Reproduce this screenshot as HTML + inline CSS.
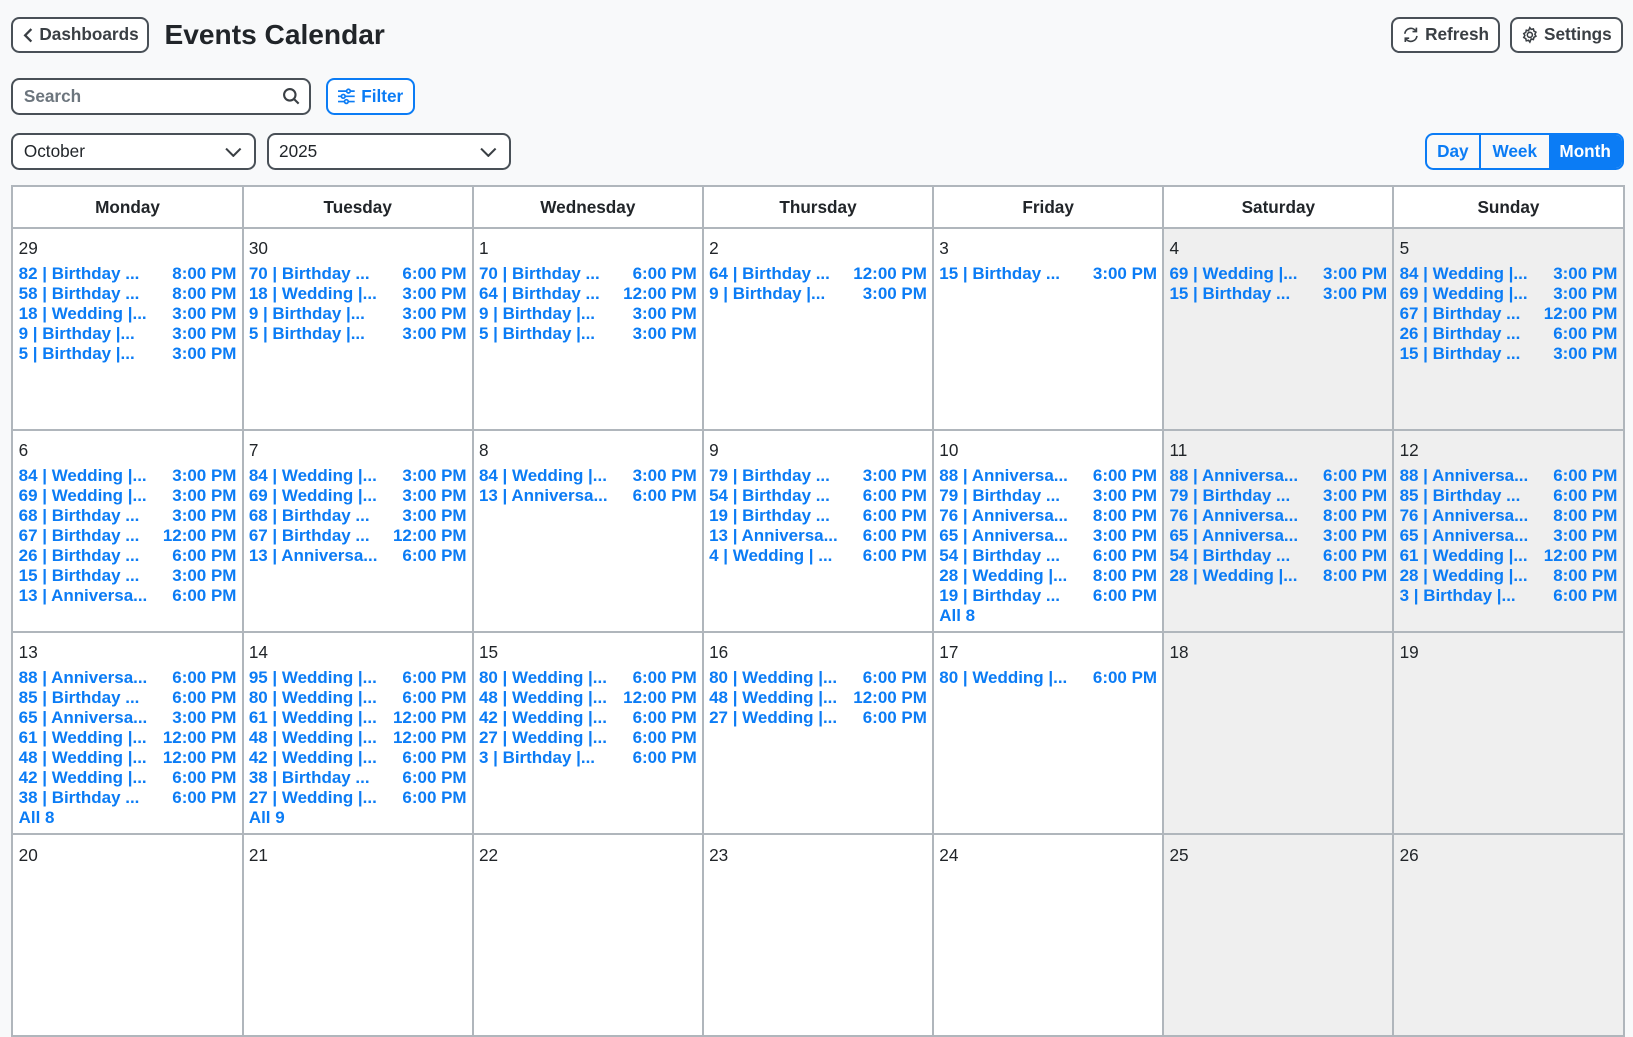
<!DOCTYPE html>
<html><head><meta charset="utf-8"><style>
*{box-sizing:border-box;margin:0;padding:0}
body{width:1633px;height:872px;overflow:hidden;background:#f8f9fa;font-family:"Liberation Sans",sans-serif;color:#212529;}
#w{position:relative;zoom:1.0415;width:1568px;height:838px}
.btn{position:absolute;border:2px solid #495057;border-radius:8px;background:#fff;font-weight:bold;font-size:16.5px;color:#3a3f44;display:flex;align-items:center;justify-content:center;gap:5px}
.inp{position:absolute;border:2px solid #495057;border-radius:8px;background:#fff;font-size:16.5px;padding-left:10px;display:flex;align-items:center}
table{position:absolute;left:11px;top:178px;border-collapse:collapse;table-layout:fixed;width:1548px}
td,th{border:2px solid #b0b6bc;width:221px;vertical-align:top;background:#fff}
th{height:40px;font-size:16.5px;font-weight:bold;vertical-align:middle}
td{height:194px;padding:8px 5px 0 5px;font-size:16.5px}
td.we{background:#efefef}
.d{height:25.5px;line-height:22px}
.e{display:flex;justify-content:space-between;color:#0b7cf5;font-weight:bold;height:19.2px;line-height:19px;font-size:16.3px;white-space:nowrap}
.seg{position:absolute;top:128px;left:1368px;height:35px;width:191px;border:2px solid #0b7cf5;border-radius:8px;display:flex;overflow:hidden;font-weight:bold;font-size:16.5px;color:#0b7cf5}
.seg div{display:flex;align-items:center;justify-content:center}
</style></head><body><div id="w">
<div class="btn" style="left:11px;top:16px;width:132px;height:35px"><svg width="12" height="16" viewBox="0 0 12 16"><path d="M9 2 L3 8 L9 14" fill="none" stroke="#3a3f44" stroke-width="2.2"/></svg>Dashboards</div>
<div style="position:absolute;left:158px;top:16px;font-size:27px;font-weight:bold;line-height:34px">Events Calendar</div>
<div class="btn" style="left:1336px;top:16px;width:104px;height:35px"><svg width="17" height="17" viewBox="0 0 16 16" fill="none" stroke="#3a3f44" stroke-width="1.5"><path d="M2.5 7A5.5 5.5 0 0 1 12.5 4.5M13.5 9A5.5 5.5 0 0 1 3.5 11.5"/><path d="M13 1.5v3.5h-3.5M3 14.5V11h3.5"/></svg>Refresh</div>
<div class="btn" style="left:1450px;top:16px;width:108px;height:35px"><svg width="17" height="17" viewBox="0 0 16 16" fill="none" stroke="#3a3f44" stroke-width="1.4"><circle cx="8" cy="8" r="2.3"/><path d="M8 1.5l1.2 1.6 2-.5.5 2 1.8 1-1 1.8 1 1.8-1.8 1-.5 2-2-.5L8 14.5l-1.2-1.6-2 .5-.5-2-1.8-1 1-1.8-1-1.8 1.8-1 .5-2 2 .5z"/></svg>Settings</div>
<div class="inp" style="left:11px;top:75px;width:288px;height:35px;color:#6c757d;font-weight:bold">Search<svg style="position:absolute;right:8px;top:7px" width="18" height="18" viewBox="0 0 18 18" fill="none" stroke="#3a3f44" stroke-width="2"><circle cx="7.5" cy="7.5" r="5.5"/><path d="M11.5 11.5L16 16"/></svg></div>
<div class="btn" style="left:313px;top:75px;width:85px;height:35px;border-color:#0b7cf5;color:#0b7cf5"><svg width="18" height="16" viewBox="0 0 18 16" fill="none" stroke="#0b7cf5" stroke-width="1.6"><path d="M1 3h16M1 8h16M1 13h16"/><circle cx="11" cy="3" r="1.8" fill="#fff"/><circle cx="6" cy="8" r="1.8" fill="#fff"/><circle cx="9" cy="13" r="1.8" fill="#fff"/></svg>Filter</div>
<div class="inp" style="left:11px;top:128px;width:235px;height:35px">October<svg style="position:absolute;right:12px;top:11px" width="16" height="10" viewBox="0 0 16 10" fill="none" stroke="#3a3f44" stroke-width="2"><path d="M1 1.5l7 7 7-7"/></svg></div>
<div class="inp" style="left:256px;top:128px;width:235px;height:35px">2025<svg style="position:absolute;right:12px;top:11px" width="16" height="10" viewBox="0 0 16 10" fill="none" stroke="#3a3f44" stroke-width="2"><path d="M1 1.5l7 7 7-7"/></svg></div>
<div class="seg"><div style="width:52px;border-right:2px solid #0b7cf5">Day</div><div style="width:65px">Week</div><div style="flex:1;background:#0b7cf5;color:#fff">Month</div></div>
<table>
<tr><th>Monday</th><th>Tuesday</th><th>Wednesday</th><th>Thursday</th><th>Friday</th><th>Saturday</th><th>Sunday</th></tr>
<tr>
<td><div class="d">29</div><div class="e"><span>82 | Birthday ...</span><span>8:00 PM</span></div><div class="e"><span>58 | Birthday ...</span><span>8:00 PM</span></div><div class="e"><span>18 | Wedding |...</span><span>3:00 PM</span></div><div class="e"><span>9 | Birthday |...</span><span>3:00 PM</span></div><div class="e"><span>5 | Birthday |...</span><span>3:00 PM</span></div></td>
<td><div class="d">30</div><div class="e"><span>70 | Birthday ...</span><span>6:00 PM</span></div><div class="e"><span>18 | Wedding |...</span><span>3:00 PM</span></div><div class="e"><span>9 | Birthday |...</span><span>3:00 PM</span></div><div class="e"><span>5 | Birthday |...</span><span>3:00 PM</span></div></td>
<td><div class="d">1</div><div class="e"><span>70 | Birthday ...</span><span>6:00 PM</span></div><div class="e"><span>64 | Birthday ...</span><span>12:00 PM</span></div><div class="e"><span>9 | Birthday |...</span><span>3:00 PM</span></div><div class="e"><span>5 | Birthday |...</span><span>3:00 PM</span></div></td>
<td><div class="d">2</div><div class="e"><span>64 | Birthday ...</span><span>12:00 PM</span></div><div class="e"><span>9 | Birthday |...</span><span>3:00 PM</span></div></td>
<td><div class="d">3</div><div class="e"><span>15 | Birthday ...</span><span>3:00 PM</span></div></td>
<td class="we"><div class="d">4</div><div class="e"><span>69 | Wedding |...</span><span>3:00 PM</span></div><div class="e"><span>15 | Birthday ...</span><span>3:00 PM</span></div></td>
<td class="we"><div class="d">5</div><div class="e"><span>84 | Wedding |...</span><span>3:00 PM</span></div><div class="e"><span>69 | Wedding |...</span><span>3:00 PM</span></div><div class="e"><span>67 | Birthday ...</span><span>12:00 PM</span></div><div class="e"><span>26 | Birthday ...</span><span>6:00 PM</span></div><div class="e"><span>15 | Birthday ...</span><span>3:00 PM</span></div></td>
</tr>
<tr>
<td><div class="d">6</div><div class="e"><span>84 | Wedding |...</span><span>3:00 PM</span></div><div class="e"><span>69 | Wedding |...</span><span>3:00 PM</span></div><div class="e"><span>68 | Birthday ...</span><span>3:00 PM</span></div><div class="e"><span>67 | Birthday ...</span><span>12:00 PM</span></div><div class="e"><span>26 | Birthday ...</span><span>6:00 PM</span></div><div class="e"><span>15 | Birthday ...</span><span>3:00 PM</span></div><div class="e"><span>13 | Anniversa...</span><span>6:00 PM</span></div></td>
<td><div class="d">7</div><div class="e"><span>84 | Wedding |...</span><span>3:00 PM</span></div><div class="e"><span>69 | Wedding |...</span><span>3:00 PM</span></div><div class="e"><span>68 | Birthday ...</span><span>3:00 PM</span></div><div class="e"><span>67 | Birthday ...</span><span>12:00 PM</span></div><div class="e"><span>13 | Anniversa...</span><span>6:00 PM</span></div></td>
<td><div class="d">8</div><div class="e"><span>84 | Wedding |...</span><span>3:00 PM</span></div><div class="e"><span>13 | Anniversa...</span><span>6:00 PM</span></div></td>
<td><div class="d">9</div><div class="e"><span>79 | Birthday ...</span><span>3:00 PM</span></div><div class="e"><span>54 | Birthday ...</span><span>6:00 PM</span></div><div class="e"><span>19 | Birthday ...</span><span>6:00 PM</span></div><div class="e"><span>13 | Anniversa...</span><span>6:00 PM</span></div><div class="e"><span>4 | Wedding | ...</span><span>6:00 PM</span></div></td>
<td><div class="d">10</div><div class="e"><span>88 | Anniversa...</span><span>6:00 PM</span></div><div class="e"><span>79 | Birthday ...</span><span>3:00 PM</span></div><div class="e"><span>76 | Anniversa...</span><span>8:00 PM</span></div><div class="e"><span>65 | Anniversa...</span><span>3:00 PM</span></div><div class="e"><span>54 | Birthday ...</span><span>6:00 PM</span></div><div class="e"><span>28 | Wedding |...</span><span>8:00 PM</span></div><div class="e"><span>19 | Birthday ...</span><span>6:00 PM</span></div><div class="e"><span>All 8</span></div></td>
<td class="we"><div class="d">11</div><div class="e"><span>88 | Anniversa...</span><span>6:00 PM</span></div><div class="e"><span>79 | Birthday ...</span><span>3:00 PM</span></div><div class="e"><span>76 | Anniversa...</span><span>8:00 PM</span></div><div class="e"><span>65 | Anniversa...</span><span>3:00 PM</span></div><div class="e"><span>54 | Birthday ...</span><span>6:00 PM</span></div><div class="e"><span>28 | Wedding |...</span><span>8:00 PM</span></div></td>
<td class="we"><div class="d">12</div><div class="e"><span>88 | Anniversa...</span><span>6:00 PM</span></div><div class="e"><span>85 | Birthday ...</span><span>6:00 PM</span></div><div class="e"><span>76 | Anniversa...</span><span>8:00 PM</span></div><div class="e"><span>65 | Anniversa...</span><span>3:00 PM</span></div><div class="e"><span>61 | Wedding |...</span><span>12:00 PM</span></div><div class="e"><span>28 | Wedding |...</span><span>8:00 PM</span></div><div class="e"><span>3 | Birthday |...</span><span>6:00 PM</span></div></td>
</tr>
<tr>
<td><div class="d">13</div><div class="e"><span>88 | Anniversa...</span><span>6:00 PM</span></div><div class="e"><span>85 | Birthday ...</span><span>6:00 PM</span></div><div class="e"><span>65 | Anniversa...</span><span>3:00 PM</span></div><div class="e"><span>61 | Wedding |...</span><span>12:00 PM</span></div><div class="e"><span>48 | Wedding |...</span><span>12:00 PM</span></div><div class="e"><span>42 | Wedding |...</span><span>6:00 PM</span></div><div class="e"><span>38 | Birthday ...</span><span>6:00 PM</span></div><div class="e"><span>All 8</span></div></td>
<td><div class="d">14</div><div class="e"><span>95 | Wedding |...</span><span>6:00 PM</span></div><div class="e"><span>80 | Wedding |...</span><span>6:00 PM</span></div><div class="e"><span>61 | Wedding |...</span><span>12:00 PM</span></div><div class="e"><span>48 | Wedding |...</span><span>12:00 PM</span></div><div class="e"><span>42 | Wedding |...</span><span>6:00 PM</span></div><div class="e"><span>38 | Birthday ...</span><span>6:00 PM</span></div><div class="e"><span>27 | Wedding |...</span><span>6:00 PM</span></div><div class="e"><span>All 9</span></div></td>
<td><div class="d">15</div><div class="e"><span>80 | Wedding |...</span><span>6:00 PM</span></div><div class="e"><span>48 | Wedding |...</span><span>12:00 PM</span></div><div class="e"><span>42 | Wedding |...</span><span>6:00 PM</span></div><div class="e"><span>27 | Wedding |...</span><span>6:00 PM</span></div><div class="e"><span>3 | Birthday |...</span><span>6:00 PM</span></div></td>
<td><div class="d">16</div><div class="e"><span>80 | Wedding |...</span><span>6:00 PM</span></div><div class="e"><span>48 | Wedding |...</span><span>12:00 PM</span></div><div class="e"><span>27 | Wedding |...</span><span>6:00 PM</span></div></td>
<td><div class="d">17</div><div class="e"><span>80 | Wedding |...</span><span>6:00 PM</span></div></td>
<td class="we"><div class="d">18</div></td>
<td class="we"><div class="d">19</div></td>
</tr>
<tr>
<td><div class="d">20</div></td><td><div class="d">21</div></td><td><div class="d">22</div></td><td><div class="d">23</div></td><td><div class="d">24</div></td><td class="we"><div class="d">25</div></td><td class="we"><div class="d">26</div></td>
</tr>
</table>
</div></body></html>
